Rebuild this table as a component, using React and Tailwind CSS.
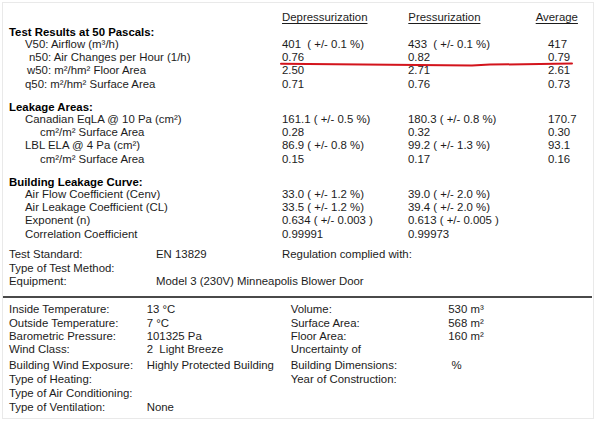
import React from 'react';

const results = [
  { label: 'V50: Airflow (m³/h)', indent: 'pl-[16px]', dep: '401  ( +/- 0.1 %)', pres: '433  ( +/- 0.1 %)', avg: '417' },
  { label: 'n50: Air Changes per Hour (1/h)', indent: 'pl-[20px]', dep: '0.76', pres: '0.82', avg: '0.79' },
  { label: 'w50: m²/hm² Floor Area', indent: 'pl-[18px]', dep: '2.50', pres: '2.71', avg: '2.61' },
  { label: 'q50: m²/hm² Surface Area', indent: 'pl-[16px]', dep: '0.71', pres: '0.76', avg: '0.73' },
];

const leakage = [
  { label: 'Canadian EqLA @ 10 Pa (cm²)', indent: 'pl-[16px]', dep: '161.1 ( +/- 0.5 %)', pres: '180.3 ( +/- 0.8 %)', avg: '170.7' },
  { label: 'cm²/m² Surface Area', indent: 'pl-[31px]', dep: '0.28', pres: '0.32', avg: '0.30' },
  { label: 'LBL ELA @ 4 Pa (cm²)', indent: 'pl-[16px]', dep: '86.9 ( +/- 0.8 %)', pres: '99.2 ( +/- 1.3 %)', avg: '93.1' },
  { label: 'cm²/m² Surface Area', indent: 'pl-[31px]', dep: '0.15', pres: '0.17', avg: '0.16' },
];

const curve = [
  { label: 'Air Flow Coefficient (Cenv)', indent: 'pl-[16px]', dep: '33.0 ( +/- 1.2 %)', pres: '39.0 ( +/- 2.0 %)', avg: '' },
  { label: 'Air Leakage Coefficient (CL)', indent: 'pl-[16px]', dep: '33.5 ( +/- 1.2 %)', pres: '39.4 ( +/- 2.0 %)', avg: '' },
  { label: 'Exponent (n)', indent: 'pl-[16px]', dep: '0.634 ( +/- 0.003 )', pres: '0.613 ( +/- 0.005 )', avg: '' },
  { label: 'Correlation Coefficient', indent: 'pl-[16px]', dep: '0.99991', pres: '0.99973', avg: '' },
];

const building = [
  ['Inside Temperature:', '13 °C', 'Volume:', '530 m³'],
  ['Outside Temperature:', '7 °C', 'Surface Area:', '568 m²'],
  ['Barometric Pressure:', '101325 Pa', 'Floor Area:', '160 m²'],
  ['Wind Class:', '2  Light Breeze', 'Uncertainty of', ''],
  ['Building Wind Exposure:', 'Highly Protected Building', 'Building Dimensions:', ' %'],
  ['Type of Heating:', '', 'Year of Construction:', ''],
  ['Type of Air Conditioning:', '', '', ''],
  ['Type of Ventilation:', 'None', '', ''],
];

const ValueRow = ({ row }) => (
  <div className="grid grid-cols-[273px_126px_140px_1fr] h-[13.4px] leading-[13.4px] whitespace-pre">
    <span className={row.indent}>{row.label}</span>
    <span>{row.dep}</span>
    <span>{row.pres}</span>
    <span>{row.avg}</span>
  </div>
);

const Heading = ({ children, className = '' }) => (
  <div className={`h-[12px] leading-[12px] font-bold text-black ${className}`}>{children}</div>
);

export default function App() {
  return (
    <div className="relative w-[600px] h-[423px] bg-white p-[2px] font-['Liberation_Sans',Arial,sans-serif] text-[11.4px] text-[#1c1c1c]">
      <div className="w-[592px] h-[417px] border border-[#e9e9e9]">
        <div className="pt-[7.3px] pl-[6px] pr-[2px]">
          {/* column headers */}
          <div className="grid grid-cols-[273px_126.3px_127.4px_1fr] h-[14px] leading-[14px]">
            <span />
            <span className="underline underline-offset-2">Depressurization</span>
            <span className="underline underline-offset-2">Pressurization</span>
            <span className="underline underline-offset-2">Average</span>
          </div>

          <Heading className="mt-[1.4px]">Test Results at 50 Pascals:</Heading>
          {results.map((r, i) => <ValueRow key={i} row={r} />)}

          <Heading className="mt-[9.4px]">Leakage Areas:</Heading>
          {leakage.map((r, i) => <ValueRow key={i} row={r} />)}

          <Heading className="mt-[9.4px]">Building Leakage Curve:</Heading>
          {curve.map((r, i) => <ValueRow key={i} row={r} />)}

          <div className="mt-[7px]">
            <div className="grid grid-cols-[147px_126px_1fr] h-[13.4px] leading-[13.4px]">
              <span>Test Standard:</span>
              <span>EN 13829</span>
              <span>Regulation complied with:</span>
            </div>
            <div className="grid grid-cols-[147px_1fr] h-[13.4px] leading-[13.4px]">
              <span>Type of Test Method:</span>
              <span />
            </div>
            <div className="grid grid-cols-[147px_1fr] h-[13.4px] leading-[13.4px]">
              <span>Equipment:</span>
              <span>Model 3 (230V) Minneapolis Blower Door</span>
            </div>
          </div>
        </div>

        <div className="mt-[7.3px] ml-[0px] mr-[1px] h-[2px] bg-[#4a4a4a]" />

        <div className="pt-[5.6px] pl-[6px]">
          {building.map((r, i) => (
            <div
              key={i}
              className={`grid grid-cols-[137.7px_144px_157.6px_1fr] whitespace-pre ${i < 4 ? 'h-[13.4px] leading-[13.4px]' : 'h-[14px] leading-[14px]'} ${i === 4 ? 'mt-[1px]' : ''}`}
            >
              <span>{r[0]}</span>
              <span>{r[1]}</span>
              <span>{r[2]}</span>
              <span>{r[3]}</span>
            </div>
          ))}
        </div>
      </div>

      {/* red marker stroke under the n50 row */}
      <svg className="absolute left-0 top-0 pointer-events-none" width="600" height="423" viewBox="0 0 600 423">
        <path
          d="M281 63.8 C 360 64.6, 430 65.6, 472 65.6 L 490 64.6 C 520 64.2, 550 64, 572 63.6"
          fill="none"
          stroke="#d3141c"
          strokeWidth="2"
          strokeLinecap="round"
        />
      </svg>
    </div>
  );
}
